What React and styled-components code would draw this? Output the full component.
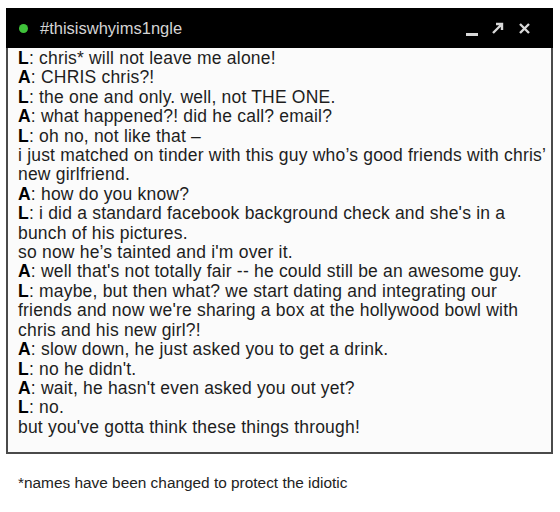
import React from 'react';
import {createGlobalStyle, styled} from 'styled-components';

// each entry is one row as wrapped in the screenshot
const lines = [
    ['L', 'chris* will not leave me alone!'],
    ['A', 'CHRIS chris?!'],
    ['L', 'the one and only. well, not THE ONE.'],
    ['A', 'what happened?! did he call? email?'],
    ['L', 'oh no, not like that –'],
    [null, 'i just matched on tinder with this guy who’s good friends with chris’'],
    [null, 'new girlfriend.'],
    ['A', 'how do you know?'],
    ['L', 'i did a standard facebook background check and she\'s in a'],
    [null, 'bunch of his pictures.'],
    [null, 'so now he’s tainted and i\'m over it.'],
    ['A', 'well that\'s not totally fair -- he could still be an awesome guy.'],
    ['L', 'maybe, but then what? we start dating and integrating our'],
    [null, 'friends and now we\'re sharing a box at the hollywood bowl with'],
    [null, 'chris and his new girl?!'],
    ['A', 'slow down, he just asked you to get a drink.'],
    ['L', 'no he didn\'t.'],
    ['A', 'wait, he hasn\'t even asked you out yet?'],
    ['L', 'no.'],
    [null, 'but you\'ve gotta think these things through!'],
];

const App = () => {
    return (
        <Page>
            <Global />
            <Window>
                <TitleBar>
                    <Dot />
                    <Title>#thisiswhyims1ngle</Title>
                    <Controls>
                        <Minimize />
                        <svg width="14" height="14" viewBox="0 0 14 14">
                            <path d="M2 12 L11 3 M5 3 H11 V9" stroke="#d8d8d8" strokeWidth="2.4" fill="none" />
                        </svg>
                        <svg width="13" height="13" viewBox="0 0 13 13">
                            <path d="M2 2 L11 11 M11 2 L2 11" stroke="#d8d8d8" strokeWidth="2.4" fill="none" />
                        </svg>
                    </Controls>
                </TitleBar>
                <Chat>
                    {lines.map(([who, text], i) => (
                        <Line key={i}>
                            {who && <><b>{who}</b>: </>}
                            {text}
                        </Line>
                    ))}
                </Chat>
            </Window>
            <Note>*names have been changed to protect the idiotic</Note>
        </Page>
    );
};

export default App;

const Global = createGlobalStyle`
    body {
        margin: 0;
        background: #fff;
        font-family: "Liberation Sans", Arial, sans-serif;
    }
`
const Page = styled.div`
    width: 560px;
    height: 512px;
    padding: 8px 0 0 6px;
    box-sizing: border-box;
`
const Window = styled.div`
    width: 547px;
`
const TitleBar = styled.div`
    height: 40px;
    background: #000;
    display: flex;
    align-items: center;
    padding: 0 22px 0 13px;
`
const Dot = styled.span`
    width: 9px;
    height: 9px;
    border-radius: 50%;
    background: #3fc23a;
`
const Title = styled.span`
    margin-left: 12px;
    color: #d4d4d4;
    font-size: 16.5px;
`
const Controls = styled.div`
    margin-left: auto;
    display: flex;
    align-items: center;
    gap: 13px;
`
const Minimize = styled.span`
    width: 12px;
    height: 3px;
    background: #d8d8d8;
    margin-top: 12px;
`
const Chat = styled.div`
    border: 2px solid #4a4a4a;
    border-top: none;
    background: #fbfbfb;
    padding: 1px 0 16px 10px;
    height: 406px;
    box-sizing: border-box;
    overflow: hidden;
    color: #1e1e1e;
    font-size: 17.5px;
    letter-spacing: 0.2px;
    line-height: 19.4px;
`
const Line = styled.div`
    white-space: nowrap;
    b {
        font-weight: bold;
        color: #000;
    }
`
const Note = styled.p`
    margin: 20px 0 0 12px;
    font-size: 15.4px;
    color: #222;
`
